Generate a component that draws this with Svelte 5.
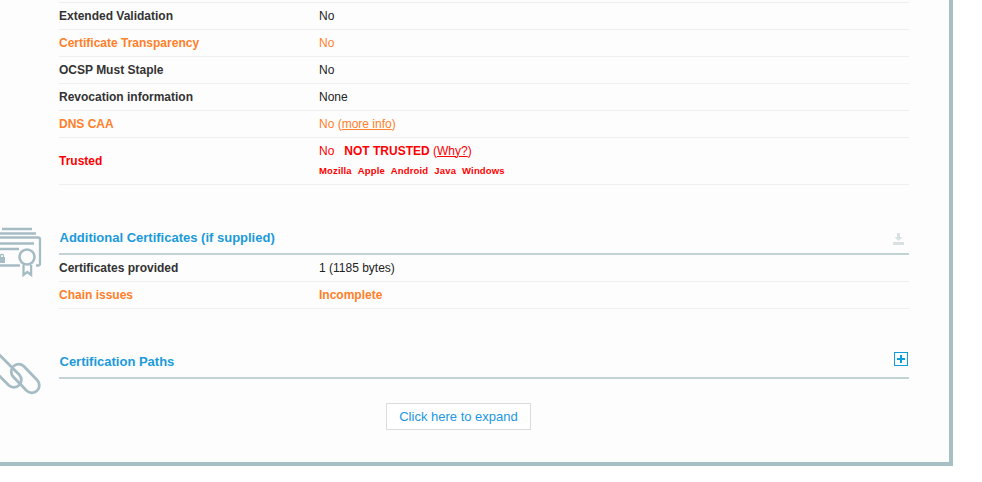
<script>
  const topRows = [
    { k: 'Extended Validation', v: 'No' },
    { k: 'Certificate Transparency', v: 'No', c: 'warn' },
    { k: 'OCSP Must Staple', v: 'No' },
    { k: 'Revocation information', v: 'None' }
  ];
  const stores = ['Mozilla', 'Apple', 'Android', 'Java', 'Windows'];
</script>

<div class="panel">
  <section class="list first">
    {#each topRows as r}
      <div class="row {r.c ?? ''}"><div class="key">{r.k}</div><div class="val">{r.v}</div></div>
    {/each}
    <div class="row warn">
      <div class="key">DNS CAA</div>
      <div class="val">No (<a href="#caa">more info</a>)</div>
    </div>
    <div class="row bad tall">
      <div class="key">Trusted</div>
      <div class="val lifted">
        <div>No &nbsp; <b>NOT TRUSTED</b> (<a href="#why">Why?</a>)</div>
        <div class="stores">{#each stores as s}<span>{s}</span>{/each}</div>
      </div>
    </div>
  </section>

  <section class="block certs">
    <svg class="side" width="50" height="60" viewBox="0 222 50 60" fill="none" stroke="#a6bcc4" stroke-width="2.300">
      <path d="M2 229h30M-1 233.500h37M-1 243.500h35M-1 249h20M-1 265.500h21"/>
      <path d="M-1 237.500h39a2 2 0 0 1 2 2v24a2 2 0 0 1-2 2h-2"/>
      <circle cx="27" cy="257" r="7.500" stroke-width="2.600"/>
      <path d="M23.500 265v10l3.800-3 3.800 3v-10"/>
      <path d="M-1 257h6v6h-6z" fill="#a6bcc4" stroke="none"/>
      <path d="M0.500 257v-2a2 2 0 0 1 3 0V257" stroke-width="1.200"/>
    </svg>
    <header class="head">
      <h2>Additional Certificates (if supplied)</h2>
      <svg class="dl" width="13" height="13" viewBox="0 0 13 13" fill="#d8e0e2">
        <path d="M5 0h3v4h2.500L6.500 8 2.500 4H5z"/>
        <path d="M1 9h11v3H1z"/>
      </svg>
    </header>
    <div class="row"><div class="key">Certificates provided</div><div class="val">1 (1185 bytes)</div></div>
    <div class="row warn"><div class="key">Chain issues</div><div class="val strong">Incomplete</div></div>
  </section>

  <section class="block paths">
    <svg class="side" width="50" height="50" viewBox="0 350 50 50" fill="none" stroke="#a6bcc4" stroke-width="2.800">
      <path d="M23.800 366.200L37.300 380.200A7.500 7.500 0 0 1 26.700 390.800L13.200 376.800A7.500 7.500 0 0 1 23.800 366.200Z"/>
      <path d="M-4.700 350.700L19.300 374.700A7.500 7.500 0 0 1 8.700 385.300L-15.300 361.300"/>
    </svg>
    <header class="head">
      <h2>Certification Paths</h2>
      <span class="plus" aria-hidden="true"></span>
    </header>
  </section>

  <div class="expand"><button type="button">Click here to expand</button></div>
</div>

<style>
  :global(body) {
    background: #fff;
    overflow: hidden;
  }
  .panel {
    box-sizing: border-box;
    width: 989px;
    height: 466px;
    margin-left: -36px;
    padding: 2px 40px 0 91px;
    background: #fdfdfd;
    border: 4px solid #a7c0c3;
    border-top: 0;
    font: 12px/15px "Liberation Sans", Arial, sans-serif;
    color: #333;
  }
  .list.first { border-top: 1px solid #f0f0f0; }
  .row {
    box-sizing: border-box;
    display: flex;
    align-items: center;
    height: 27px;
    border-bottom: 1px solid #f0f0f0;
  }
  .row.tall { height: 47px; }
  .key { width: 260px; font-weight: 700; }
  .val { color: #222; }
  .lifted { padding-bottom: 2px; }
  .warn .key, .warn .val, .warn a { color: #ff7f2a; }
  .bad .key, .bad .val, .bad a { color: #f00; }
  .warn a, .bad a { text-decoration: underline; }
  .strong { font-weight: 700; }
  b { font-weight: 700; }
  .stores {
    display: flex;
    gap: 6px;
    margin-top: 6px;
    font-size: 9.500px;
    line-height: 12px;
    font-weight: 700;
    letter-spacing: 0.150px;
  }
  .block { position: relative; }
  .certs, .paths { margin-top: 29px; }
  .head {
    box-sizing: border-box;
    display: flex;
    justify-content: space-between;
    align-items: center;
    height: 41px;
    padding-top: 8px;
    border-bottom: 2px solid #c3d2d5;
  }
  h2 {
    margin: 0 0 0 0.500px;
    font-size: 13px;
    line-height: 16px;
    font-weight: 700;
    color: #1b9ad9;
  }
  .side { position: absolute; left: -59px; }
  .certs .side { top: 8px; }
  .paths .side { top: 12px; }
  .dl { margin: 3px 4px 0 0; }
  .plus {
    box-sizing: border-box;
    width: 14px;
    height: 14px;
    margin: -6px 1px 0 0;
    border: 1px solid #0b9fdc;
    background:
      linear-gradient(#0b9fdc, #0b9fdc) center / 8px 2px no-repeat,
      linear-gradient(#0b9fdc, #0b9fdc) center / 2px 8px no-repeat;
  }
  .expand {
    display: flex;
    justify-content: center;
    margin: 24px -40px 0 -91px;
  }
  button {
    box-sizing: border-box;
    width: 145px;
    height: 27px;
    padding: 0;
    background: #fff;
    border: 1px solid #dcdcdc;
    font: 13px "Liberation Sans", Arial, sans-serif;
    color: #2196e3;
  }
</style>
